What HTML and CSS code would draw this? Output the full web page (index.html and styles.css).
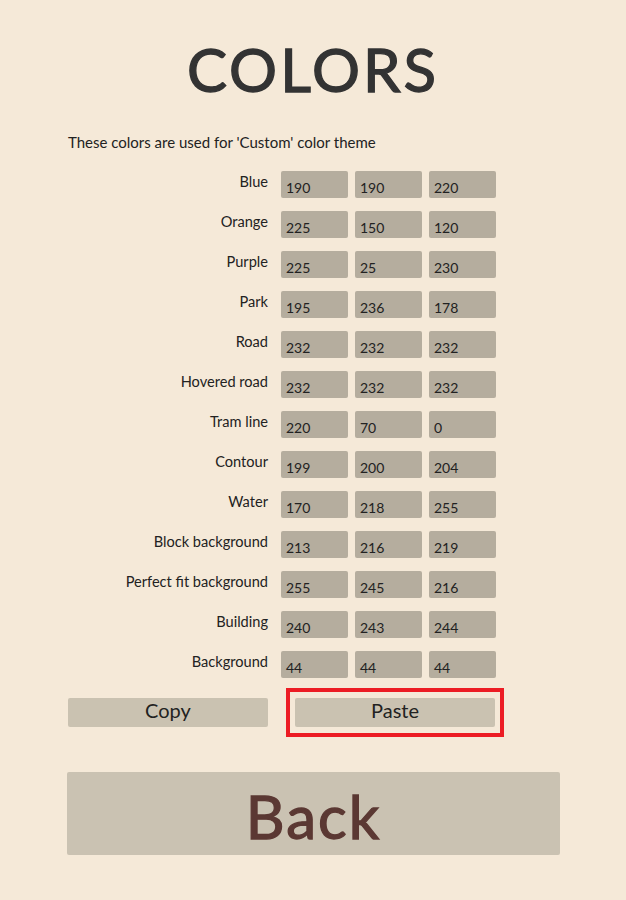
FILE: index.html
```html
<!DOCTYPE html>
<html>
<head>
<meta charset="utf-8">
<link rel="stylesheet" href="styles.css">
</head>
<body>
<div class="page">
  <h1 class="title">COLORS</h1>
  <p class="desc">These colors are used for 'Custom' color theme</p>
  <div class="rows">
    <div class="row"><span class="label">Blue</span><span class="inp">190</span><span class="inp">190</span><span class="inp">220</span></div>
    <div class="row"><span class="label">Orange</span><span class="inp">225</span><span class="inp">150</span><span class="inp">120</span></div>
    <div class="row"><span class="label">Purple</span><span class="inp">225</span><span class="inp">25</span><span class="inp">230</span></div>
    <div class="row"><span class="label">Park</span><span class="inp">195</span><span class="inp">236</span><span class="inp">178</span></div>
    <div class="row"><span class="label">Road</span><span class="inp">232</span><span class="inp">232</span><span class="inp">232</span></div>
    <div class="row"><span class="label">Hovered road</span><span class="inp">232</span><span class="inp">232</span><span class="inp">232</span></div>
    <div class="row"><span class="label">Tram line</span><span class="inp">220</span><span class="inp">70</span><span class="inp">0</span></div>
    <div class="row"><span class="label">Contour</span><span class="inp">199</span><span class="inp">200</span><span class="inp">204</span></div>
    <div class="row"><span class="label">Water</span><span class="inp">170</span><span class="inp">218</span><span class="inp">255</span></div>
    <div class="row"><span class="label">Block background</span><span class="inp">213</span><span class="inp">216</span><span class="inp">219</span></div>
    <div class="row"><span class="label">Perfect fit background</span><span class="inp">255</span><span class="inp">245</span><span class="inp">216</span></div>
    <div class="row"><span class="label">Building</span><span class="inp">240</span><span class="inp">243</span><span class="inp">244</span></div>
    <div class="row"><span class="label">Background</span><span class="inp">44</span><span class="inp">44</span><span class="inp">44</span></div>
  </div>
  <div class="actions">
    <button class="btn">Copy</button>
    <div class="focus"><button class="btn">Paste</button></div>
  </div>
  <button class="back">Back</button>
</div>
</body>
</html>
```
FILE: styles.css
```css
html, body {
  margin: 0;
  padding: 0;
  background: #f5e9d8;
}
.page {
  width: 626px;
  height: 900px;
  box-sizing: border-box;
  padding: 0 0 0 68px;
  font-family: "Lato", "Open Sans", sans-serif;
  color: #222;
}
.title {
  margin: 0;
  padding-top: 34px;
  margin-left: -68px;
  text-align: center;
  font-family: "Lato", sans-serif;
  font-weight: 400;
  font-size: 60px;
  line-height: 70px;
  letter-spacing: 3px;
  color: #333;
  -webkit-text-stroke: 1.3px #333;
}
.desc {
  margin: 29px 0 0 0;
  font-size: 15px;
  line-height: 18px;
}
.rows {
  margin-top: 20px;
  display: flex;
  flex-direction: column;
  gap: 13px;
}
.row {
  display: flex;
  align-items: flex-start;
  height: 27px;
}
.label {
  width: 200px;
  text-align: right;
  font-size: 14.6px;
  line-height: 22px;
  margin-right: 13px;
}
.inp {
  width: 67px;
  height: 27px;
  box-sizing: border-box;
  background: #b5ad9e;
  border-radius: 2px;
  margin-right: 7px;
  padding: 8px 0 0 5px;
  font-size: 14px;
  line-height: 18px;
  color: #222;
}
.actions {
  margin-top: 10px;
  display: flex;
  align-items: center;
}
.btn {
  width: 200px;
  height: 29px;
  box-sizing: border-box;
  border: none;
  border-radius: 2px;
  background: #cac2b1;
  font-family: "Lato", sans-serif;
  font-size: 20px;
  line-height: 22px;
  color: #222;
  padding: 0 0 5px 0;
}
.focus {
  margin-left: 18px;
  border: 4px solid #ec1c24;
  padding: 6px 5px;
}
.focus .btn {
  display: block;
}
.back {
  display: block;
  margin-top: 35px;
  margin-left: -1px;
  width: 493px;
  height: 83px;
  border: none;
  border-radius: 2px;
  background: #cac2b2;
  font-family: "Lato", sans-serif;
  font-weight: 400;
  font-size: 60px;
  color: #5b3833;
  -webkit-text-stroke: 1.3px #5b3833;
  letter-spacing: 2px;
  padding: 4px 0 0 0;
}
```
